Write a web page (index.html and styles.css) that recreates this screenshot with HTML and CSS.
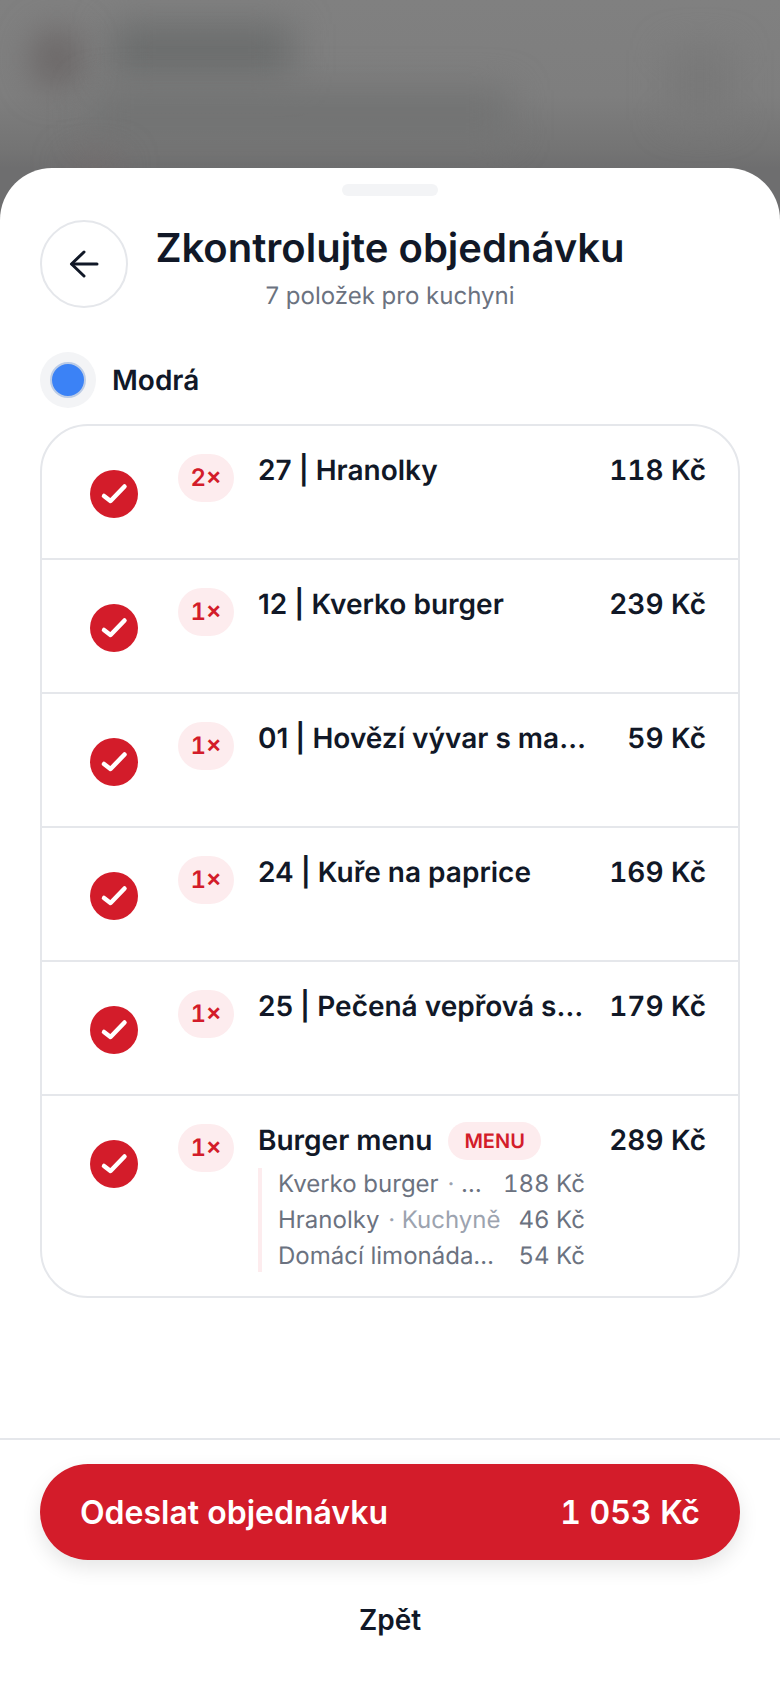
FILE: index.html
```html
<!DOCTYPE html>
<html lang="cs">

<head>
    <meta charset="UTF-8">
    <meta name="viewport" content="width=device-width, initial-scale=1.0">
    <title>Zkontrolujte objednávku</title>
    <link rel="stylesheet" href="styles.css">
</head>

<body>
    <div class="backdrop">
        <div class="blob blob-logo"></div>
        <div class="blob blob-title"></div>
        <div class="blob blob-mid"></div>
        <div class="blob blob-right"></div>
        <div class="blob blob-red"></div>
    </div>

    <div class="sheet">
        <div class="handle"></div>

        <div class="header">
            <button class="back-btn" type="button">
                <svg width="32" height="32" viewBox="0 0 32 32" fill="none" stroke="#111827" stroke-width="3" stroke-linecap="round" stroke-linejoin="round">
                    <path d="M29 16H4"></path>
                    <path d="M16 4L3.500 16L16 28"></path>
                </svg>
            </button>
            <div class="header-text">
                <h1>Zkontrolujte objednávku</h1>
                <p>7 položek pro kuchyni</p>
            </div>
        </div>

        <div class="table-row">
            <span class="table-dot"><span class="table-dot-inner"></span></span>
            <span class="table-name">Modrá</span>
        </div>

        <div class="order-list">
            <div class="order-item">
                <span class="check"><svg width="48" height="48" viewBox="0 0 48 48" fill="none" stroke="#fff" stroke-width="4.500" stroke-linecap="round" stroke-linejoin="round"><path d="M14 26L20.500 31L34.500 16.500"></path></svg></span>
                <span class="qty">2×</span>
                <div class="item-body">
                    <div class="item-name"><span class="item-title">27 | Hranolky</span></div>
                </div>
                <span class="item-price">118 Kč</span>
            </div>

            <div class="order-item">
                <span class="check"><svg width="48" height="48" viewBox="0 0 48 48" fill="none" stroke="#fff" stroke-width="4.500" stroke-linecap="round" stroke-linejoin="round"><path d="M14 26L20.500 31L34.500 16.500"></path></svg></span>
                <span class="qty">1×</span>
                <div class="item-body">
                    <div class="item-name"><span class="item-title">12 | Kverko burger</span></div>
                </div>
                <span class="item-price">239 Kč</span>
            </div>

            <div class="order-item">
                <span class="check"><svg width="48" height="48" viewBox="0 0 48 48" fill="none" stroke="#fff" stroke-width="4.500" stroke-linecap="round" stroke-linejoin="round"><path d="M14 26L20.500 31L34.500 16.500"></path></svg></span>
                <span class="qty">1×</span>
                <div class="item-body">
                    <div class="item-name"><span class="item-title">01 | Hovězí vývar s ma…</span></div>
                </div>
                <span class="item-price">59 Kč</span>
            </div>

            <div class="order-item">
                <span class="check"><svg width="48" height="48" viewBox="0 0 48 48" fill="none" stroke="#fff" stroke-width="4.500" stroke-linecap="round" stroke-linejoin="round"><path d="M14 26L20.500 31L34.500 16.500"></path></svg></span>
                <span class="qty">1×</span>
                <div class="item-body">
                    <div class="item-name"><span class="item-title">24 | Kuře na paprice</span></div>
                </div>
                <span class="item-price">169 Kč</span>
            </div>

            <div class="order-item">
                <span class="check"><svg width="48" height="48" viewBox="0 0 48 48" fill="none" stroke="#fff" stroke-width="4.500" stroke-linecap="round" stroke-linejoin="round"><path d="M14 26L20.500 31L34.500 16.500"></path></svg></span>
                <span class="qty">1×</span>
                <div class="item-body">
                    <div class="item-name"><span class="item-title">25 | Pečená vepřová s…</span></div>
                </div>
                <span class="item-price">179 Kč</span>
            </div>

            <div class="order-item">
                <span class="check"><svg width="48" height="48" viewBox="0 0 48 48" fill="none" stroke="#fff" stroke-width="4.500" stroke-linecap="round" stroke-linejoin="round"><path d="M14 26L20.500 31L34.500 16.500"></path></svg></span>
                <span class="qty">1×</span>
                <div class="item-body">
                    <div class="item-name">
                        <span class="item-title">Burger menu</span>
                        <span class="menu-tag">MENU</span>
                    </div>
                    <div class="sub-list">
                        <div class="sub-row">
                            <span class="sub-name">Kverko burger <span class="sub-place">·</span> …</span>
                            <span class="sub-price">188 Kč</span>
                        </div>
                        <div class="sub-row">
                            <span class="sub-name">Hranolky <span class="sub-place">· Kuchyně</span></span>
                            <span class="sub-price">46 Kč</span>
                        </div>
                        <div class="sub-row">
                            <span class="sub-name">Domácí limonáda…</span>
                            <span class="sub-price">54 Kč</span>
                        </div>
                    </div>
                </div>
                <span class="item-price">289 Kč</span>
            </div>
        </div>

        <div class="footer">
            <button class="submit-btn" type="button">
                <span>Odeslat objednávku</span>
                <span class="submit-total">1 053 Kč</span>
            </button>
            <button class="cancel-btn" type="button">Zpět</button>
        </div>
    </div>
</body>

</html>
```

FILE: styles.css
```css
* {
    box-sizing: border-box;
}

body {
    font-family: 'Inter', 'Noto Sans', sans-serif;
    text-rendering: geometricPrecision;
    background-color: #7d7d7d;
    color: #111827;
    margin: 0;
    padding: 0;
    height: 1688px;
    overflow: hidden;
    position: relative;
}

/* blurred page behind the sheet */
.backdrop {
    position: absolute;
    top: 0;
    left: 0;
    width: 100%;
    height: 240px;
    overflow: hidden;
    background: linear-gradient(180deg, #808080 0%, #7e7e7e 40%, #747474 62%, #6e6e6f 70%);
}

.blob {
    position: absolute;
    filter: blur(18px);
}

.blob-logo {
    left: 34px;
    top: 30px;
    width: 46px;
    height: 58px;
    border-radius: 50%;
    background-color: #686363;
}

.blob-title {
    left: 112px;
    top: 24px;
    width: 180px;
    height: 52px;
    background-color: #6b6d6d;
}

.blob-mid {
    left: 90px;
    top: 90px;
    width: 420px;
    height: 50px;
    background-color: #727373;
}

.blob-right {
    left: 670px;
    top: 50px;
    width: 60px;
    height: 70px;
    background-color: #787878;
}

.blob-red {
    left: 70px;
    top: 160px;
    width: 50px;
    height: 14px;
    background-color: #756a6b;
}

.sheet {
    position: relative;
    margin-top: 168px;
    height: 1520px;
    background-color: #fff;
    border-radius: 52px 52px 0 0;
    padding-top: 16px;
    display: flex;
    flex-direction: column;
}

.handle {
    width: 96px;
    height: 12px;
    margin: 0 auto;
    border-radius: 6px;
    background-color: #f3f4f6;
}

.header {
    display: grid;
    grid-template-columns: 88px 1fr 88px;
    margin: 24px 40px 0;
}

.back-btn {
    width: 88px;
    height: 88px;
    border: 2px solid #e5e7eb;
    border-radius: 50%;
    background-color: #fff;
    padding: 0;
    display: flex;
    justify-content: center;
    align-items: center;
}

.header-text {
    text-align: center;
}

.header-text h1 {
    margin: 4px 0 0;
    font-size: 40px;
    line-height: 48px;
    font-weight: 600;
    color: #111827;
}

.header-text p {
    margin: 8px 0 0;
    font-size: 24px;
    line-height: 32px;
    color: #6b7280;
}

.table-row {
    display: flex;
    align-items: center;
    gap: 16px;
    margin: 40px 40px 0;
}

.table-dot {
    width: 56px;
    height: 56px;
    border-radius: 50%;
    background-color: #f3f4f6;
    display: flex;
    justify-content: center;
    align-items: center;
}

.table-dot-inner {
    width: 36px;
    height: 36px;
    border-radius: 50%;
    background-color: #3b82f6;
    border: 2px solid #bccce6;
}

.table-name {
    font-size: 28px;
    font-weight: 600;
    color: #111827;
}

.order-list {
    margin: 16px 40px 0;
    border: 2px solid #e5e7eb;
    border-radius: 48px;
    overflow: hidden;
}

.order-item {
    display: flex;
    align-items: flex-start;
    min-height: 134px;
    padding: 28px 32px 24px 48px;
    border-top: 2px solid #e5e7eb;
}

.order-item:first-child {
    border-top: none;
    min-height: 132px;
}

.check {
    flex: none;
    width: 48px;
    height: 48px;
    margin-top: 16px;
    border-radius: 50%;
    background-color: #d31c2a;
}

.check svg {
    display: block;
}

.qty {
    flex: none;
    width: 56px;
    height: 48px;
    margin-left: 40px;
    border-radius: 24px;
    background-color: #fdecee;
    color: #d31c2a;
    font-size: 24px;
    font-weight: 600;
    font-variant-numeric: tabular-nums;
    line-height: 48px;
    text-align: center;
}

.item-body {
    flex: 1;
    min-width: 0;
    margin-left: 24px;
    margin-top: -3px;
}

.item-name {
    display: flex;
    align-items: center;
    gap: 16px;
    height: 38px;
}

.item-title {
    font-size: 28px;
    font-weight: 600;
    line-height: 38px;
    white-space: nowrap;
}

.menu-tag {
    flex: none;
    height: 38px;
    margin-top: 2px;
    padding: 0 16px;
    border-radius: 19px;
    background-color: #fdecee;
    color: #d31c2a;
    font-size: 20px;
    font-weight: 600;
    line-height: 38px;
}

.item-price {
    flex: none;
    width: 104px;
    margin-left: 17px;
    margin-top: -3px;
    font-size: 28px;
    font-weight: 600;
    font-variant-numeric: tabular-nums;
    line-height: 38px;
    text-align: right;
    white-space: nowrap;
}

.sub-list {
    margin-top: 9px;
    padding-left: 16px;
    border-left: 4px solid #fdecee;
    display: flex;
    flex-direction: column;
    gap: 4px;
}

.sub-row {
    display: flex;
    justify-content: space-between;
    gap: 16px;
    font-size: 24px;
    line-height: 32px;
    color: #6b7280;
}

.sub-name {
    white-space: nowrap;
}

.sub-place {
    margin-left: 2px;
    color: #9ca3af;
}

.sub-price {
    flex: none;
    font-variant-numeric: tabular-nums;
    white-space: nowrap;
}

.footer {
    margin-top: auto;
    padding: 24px 40px 0;
    height: 250px;
    border-top: 2px solid #e5e7eb;
}

.submit-btn {
    width: 100%;
    height: 96px;
    padding: 0 40px;
    border: none;
    border-radius: 48px;
    background-color: #d31c2a;
    box-shadow: 0 8px 20px rgba(0, 0, 0, 0.1);
    color: #fff;
    font-family: inherit;
    font-size: 32px;
    font-weight: 600;
    display: flex;
    justify-content: space-between;
    align-items: center;
}

.submit-total {
    font-variant-numeric: tabular-nums;
}

.cancel-btn {
    display: block;
    width: 100%;
    margin-top: 28px;
    height: 64px;
    border: none;
    background: none;
    padding: 0;
    color: #111827;
    font-family: inherit;
    font-size: 28px;
    font-weight: 600;
}
```
